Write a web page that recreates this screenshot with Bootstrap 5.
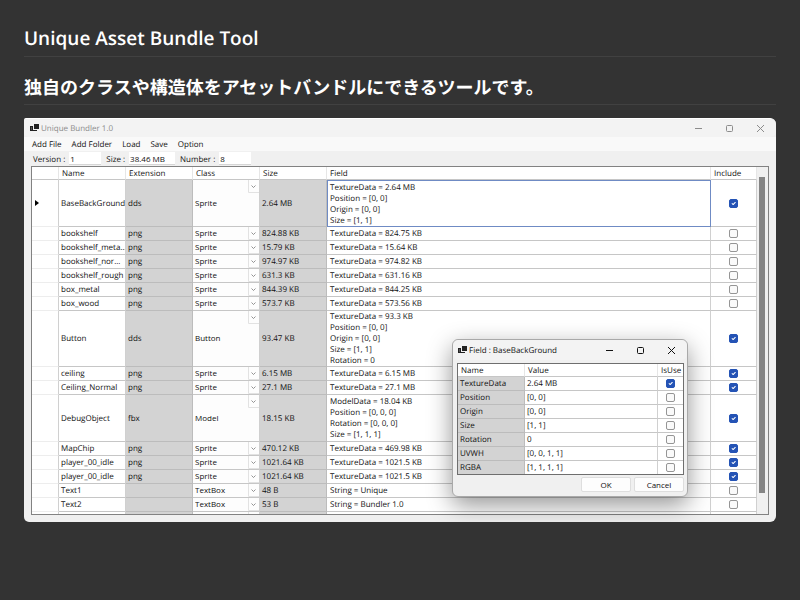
<!DOCTYPE html>
<html lang="ja">
<head>
<meta charset="utf-8">
<meta name="viewport" content="width=device-width, initial-scale=1">
<title>Unique Asset Bundle Tool</title>
<link href="https://cdn.jsdelivr.net/npm/bootstrap@5.3.0/dist/css/bootstrap.min.css" rel="stylesheet">
<style>
  body { background: #333; font-family: "Open Sans", "Noto Sans CJK JP", sans-serif; text-rendering: geometricPrecision; }
  .page { padding-top: 26px; }
  .page-title { font-size: 19px; line-height: 24px; font-weight: 600; color: #fff; border-bottom: 1px solid #414141; padding-bottom: 6px; margin-bottom: 19px; }
  .page-sub { font-size: 18px; line-height: 22px; font-weight: 700; color: #fff; border-bottom: 1px solid #414141; padding-bottom: 6px; margin-bottom: 13px; font-family: "Noto Sans CJK JP", sans-serif; }

  .win { font-size: 8px; line-height: 11px; color: #111; background: #f0f0f0; }
  .main-win { border-radius: 2px 6px 6px 5px; border-top: 1px solid #fff; padding-bottom: 7px; }
  .titlebar { height: 18px; background: #f3f3f3; border-radius: inherit; padding: 0 11px 0 6px; }
  .main-win > .titlebar { color: #8c8c8c; }
  .app-icon { width: 9px; height: 8px; margin-right: 2px; }
  .win-btn { border: 0; background: none; padding: 0; width: 9px; height: 9px; line-height: 0; color: inherit; }
  .win-btn svg { display: block; width: 9px; height: 9px; fill: none; stroke: currentColor; }
  .win-btns { gap: 22px; }
  .menu { height: 14px; background: #f9f9f9; padding-left: 8px; gap: 10px; }
  .menu a { color: inherit; text-decoration: none; }
  .stat { height: 15px; padding-left: 9px; }
  .stat label { margin-top: 2px; }
  .stat input { border: 0; border-bottom: 1px solid #d6d6d6; background: #fff; height: 13px; padding: 0 1px; color: inherit; font-size: 8px; line-height: 11px; margin: 0 5px 0 4px; }
  .w-short { width: 32px; }
  .w-long { width: 46px; }

  .grid-box { border: 1px solid #828282; background: #fff; margin: 0 7px; height: 349px; overflow: hidden; }
  .data-grid { table-layout: fixed; width: 100%; border-collapse: separate; border-spacing: 0; }
  .data-grid th, .data-grid td { padding: 0 0 0 2px; border-right: 1px solid #d0d0d0; border-bottom: 1px solid #c6c6c6; height: 14px; vertical-align: middle; white-space: nowrap; overflow: hidden; }
  .data-grid th { height: 13px; font-weight: 400; padding-left: 3px; border-right-color: #e6e6e6; }
  .data-grid .shaded { background: #d3d3d3; border-right-color: #bcbcbc; border-bottom-color: #bcbcbc; }
  .data-grid .gutter { border-bottom-color: #ededed; }
  .data-grid .multi { padding-left: 3px; white-space: pre-line; }
  .data-grid .picked { border: 1px solid #6f8bc4; padding-left: 2px; }
  .data-grid .tick { text-align: center; padding: 0; }
  .h-4 td { height: 47px; }
  .h-5 td { height: 56px; }
  .data-grid .pick-cell { padding: 0; }
  .pick-cell select { display: block; appearance: none; border: 0; border-radius: 0; width: 100%; height: 13px; padding: 0 12px 2px 2px; color: inherit; font-size: 8px; line-height: 11px;
    background: #fdfdfd url("data:image/svg+xml,%3Csvg xmlns='http://www.w3.org/2000/svg' width='11' height='13'%3E%3Cpath d='M.5 0V12.500H11' fill='none' stroke='%23e2e2e2'/%3E%3Cpath d='M3.500 5.500L5.500 7.500L7.500 5.500' fill='none' stroke='%23777' stroke-width='.8'/%3E%3C/svg%3E") no-repeat right top; }
  .h-4 select { height: 46px; }
  .h-5 select { height: 55px; }
  .box.form-check-input { width: 9px; height: 9px; border: 1px solid #959595; border-radius: 2px; background-color: #fafafa; display: block; float: none; margin: 0 auto; }
  .box.form-check-input:checked { background-color: #2453b5; border-color: #2453b5; }
  .c-gutter { width: 27px; }
  .c-std { width: 67px; }
  .c-tick { width: 46px; }
  .rail { width: 11px; background: #f0f0f0; padding: 10px 3px 21px 2px; }
  .rail-thumb { background: #858585; }

  .dlg { position: absolute; right: 88px; bottom: 25px; width: 236px; border: 1px solid #a9a9a9; border-radius: 6px; padding-bottom: 4px; box-shadow: 0 8px 24px rgba(0,0,0,.42); }
  .dlg .titlebar { height: 20px; margin-bottom: 3px; padding-left: 5px; }
  .dlg .grid-box { margin: 0 3px 0 4px; height: auto; border-color: #6e6e6e; }
  .dlg tr:last-child td { border-bottom: 0; height: 13px; }
  .dlg th:last-child, .dlg td:last-child { border-right: 0; }
  .data-grid .c-use { width: 25px; }
  .dlg-actions { gap: 3px; padding: 2px 3px 0; }
  .act { width: 50px; height: 15px; font-size: 8px; line-height: 11px; padding: 0; background: #fdfdfd; border: 1px solid #dedede; border-radius: 2px; color: #111; }
</style>
</head>
<body>
<svg class="d-none" xmlns="http://www.w3.org/2000/svg">
  <symbol id="app" viewBox="0 0 9 8"><path d="M4 0h5v5H4z" fill="#222"/><path d="M0 2h3v5H0z" fill="#222"/><path d="M3 6.500h4" stroke="#222"/><path d="M1.500 3v3" stroke="#777" stroke-width=".6"/></symbol>
  <symbol id="min" viewBox="0 0 9 9"><path d="M1 4.500h7"/></symbol>
  <symbol id="max" viewBox="0 0 9 9"><rect x="1.500" y="1.500" width="6" height="6" rx="1"/></symbol>
  <symbol id="cls" viewBox="0 0 9 9"><path d="M1 1l7 7M8 1L1 8"/></symbol>
</svg>
<main class="page container-fluid px-4">
  <h1 class="page-title">Unique Asset Bundle Tool</h1>
  <h2 class="page-sub">独自のクラスや構造体をアセットバンドルにできるツールです。</h2>

  <section class="win main-win position-relative">
    <header class="titlebar d-flex align-items-center">
      <svg class="app-icon"><use href="#app"/></svg><span class="me-auto">Unique Bundler 1.0</span>
      <div class="win-btns d-flex">
        <button class="win-btn" aria-label="Minimize"><svg><use href="#min"/></svg></button>
        <button class="win-btn" aria-label="Maximize"><svg><use href="#max"/></svg></button>
        <button class="win-btn" aria-label="Close"><svg><use href="#cls"/></svg></button>
      </div>
    </header>
    <nav class="menu d-flex align-items-center">
      <a href="#">Add File</a><a href="#">Add Folder</a><a href="#">Load</a><a href="#">Save</a><a href="#">Option</a>
    </nav>
    <div class="stat d-flex align-items-center">
      <label for="ver">Version :</label><input id="ver" class="w-short" value="1">
      <label for="size">Size :</label><input id="size" class="w-long" value="38.46 MB">
      <label for="num">Number :</label><input id="num" class="w-short" value="8">
    </div>
    <div class="grid-box d-flex">
      <div class="flex-grow-1">
        <table class="data-grid">
          <colgroup><col class="c-gutter"><col class="c-std"><col class="c-std"><col class="c-std"><col class="c-std"><col><col class="c-tick"></colgroup>
          <thead><tr><th></th><th>Name</th><th>Extension</th><th>Class</th><th>Size</th><th>Field</th><th>Include</th></tr></thead>
          <tbody id="assets"></tbody>
        </table>
      </div>
      <div class="rail d-flex flex-shrink-0"><div class="rail-thumb flex-grow-1"></div></div>
    </div>

    <div class="win dlg" role="dialog" aria-label="Field : BaseBackGround">
      <header class="titlebar d-flex align-items-center">
        <svg class="app-icon"><use href="#app"/></svg><span class="me-auto">Field : BaseBackGround</span>
        <div class="win-btns d-flex">
          <button class="win-btn" aria-label="Minimize"><svg><use href="#min"/></svg></button>
          <button class="win-btn" aria-label="Maximize"><svg><use href="#max"/></svg></button>
          <button class="win-btn" aria-label="Close"><svg><use href="#cls"/></svg></button>
        </div>
      </header>
      <div class="grid-box">
        <table class="data-grid">
          <colgroup><col class="c-std"><col><col class="c-use"></colgroup>
          <thead><tr><th>Name</th><th>Value</th><th>IsUse</th></tr></thead>
          <tbody id="fields"></tbody>
        </table>
      </div>
      <div class="dlg-actions d-flex justify-content-end">
        <button class="act btn">OK</button><button class="act btn">Cancel</button>
      </div>
    </div>
  </section>
</main>
<script src="https://cdn.jsdelivr.net/npm/bootstrap@5.3.0/dist/js/bootstrap.bundle.min.js"></script>
<script>
  // name, extension, class, size, field lines, included
  const assets = [
    ['BaseBackGround', 'dds', 'Sprite', '2.64 MB', 'TextureData = 2.64 MB\nPosition = [0, 0]\nOrigin = [0, 0]\nSize = [1, 1]', 1],
    ['bookshelf', 'png', 'Sprite', '824.88 KB', 'TextureData = 824.75 KB', 0],
    ['bookshelf_meta…', 'png', 'Sprite', '15.79 KB', 'TextureData = 15.64 KB', 0],
    ['bookshelf_nor...', 'png', 'Sprite', '974.97 KB', 'TextureData = 974.82 KB', 0],
    ['bookshelf_rough', 'png', 'Sprite', '631.3 KB', 'TextureData = 631.16 KB', 0],
    ['box_metal', 'png', 'Sprite', '844.39 KB', 'TextureData = 844.25 KB', 0],
    ['box_wood', 'png', 'Sprite', '573.7 KB', 'TextureData = 573.56 KB', 0],
    ['Button', 'dds', 'Button', '93.47 KB', 'TextureData = 93.3 KB\nPosition = [0, 0]\nOrigin = [0, 0]\nSize = [1, 1]\nRotation = 0', 1],
    ['ceiling', 'png', 'Sprite', '6.15 MB', 'TextureData = 6.15 MB', 1],
    ['Ceiling_Normal', 'png', 'Sprite', '27.1 MB', 'TextureData = 27.1 MB', 1],
    ['DebugObject', 'fbx', 'Model', '18.15 KB', 'ModelData = 18.04 KB\nPosition = [0, 0, 0]\nRotation = [0, 0, 0]\nSize = [1, 1, 1]', 1],
    ['MapChip', 'png', 'Sprite', '470.12 KB', 'TextureData = 469.98 KB', 1],
    ['player_00_idle', 'png', 'Sprite', '1021.64 KB', 'TextureData = 1021.5 KB', 1],
    ['player_00_idle', 'png', 'Sprite', '1021.64 KB', 'TextureData = 1021.5 KB', 1],
    ['Text1', '', 'TextBox', '48 B', 'String = Unique', 0],
    ['Text2', '', 'TextBox', '53 B', 'String = Bundler 1.0', 0],
    ['', '', '', '', '', 0]
  ];
  const box = (name, on) => `<input class="box form-check-input" type="checkbox" aria-label="${name}"${on ? ' checked' : ''}>`;
  document.getElementById('assets').innerHTML = assets.map(([name, ext, cls, size, field, on], i) =>
    `<tr class="h-${field.split('\n').length}"><td class="gutter">${i ? '' : '<svg class="d-block" width="6" height="8"><path d="M1 1v6l4-3z"/></svg>'}</td>
     <td>${name}</td><td class="shaded">${ext}</td>
     <td class="pick-cell"><select aria-label="Class of ${name}"><option>${cls}</option></select></td>
     <td class="shaded">${size}</td><td class="multi${i ? '' : ' picked'}">${field}</td>
     <td class="tick">${box('Include ' + name, on)}</td></tr>`).join('');

  const fields = [['TextureData', '2.64 MB', 1], ['Position', '[0, 0]', 0], ['Origin', '[0, 0]', 0], ['Size', '[1, 1]', 0],
    ['Rotation', '0', 0], ['UVWH', '[0, 0, 1, 1]', 0], ['RGBA', '[1, 1, 1, 1]', 0]];
  document.getElementById('fields').innerHTML = fields.map(([name, value, on]) =>
    `<tr><td class="shaded">${name}</td><td>${value}</td><td class="tick">${box('Use ' + name, on)}</td></tr>`).join('');
</script>
</body>
</html>
